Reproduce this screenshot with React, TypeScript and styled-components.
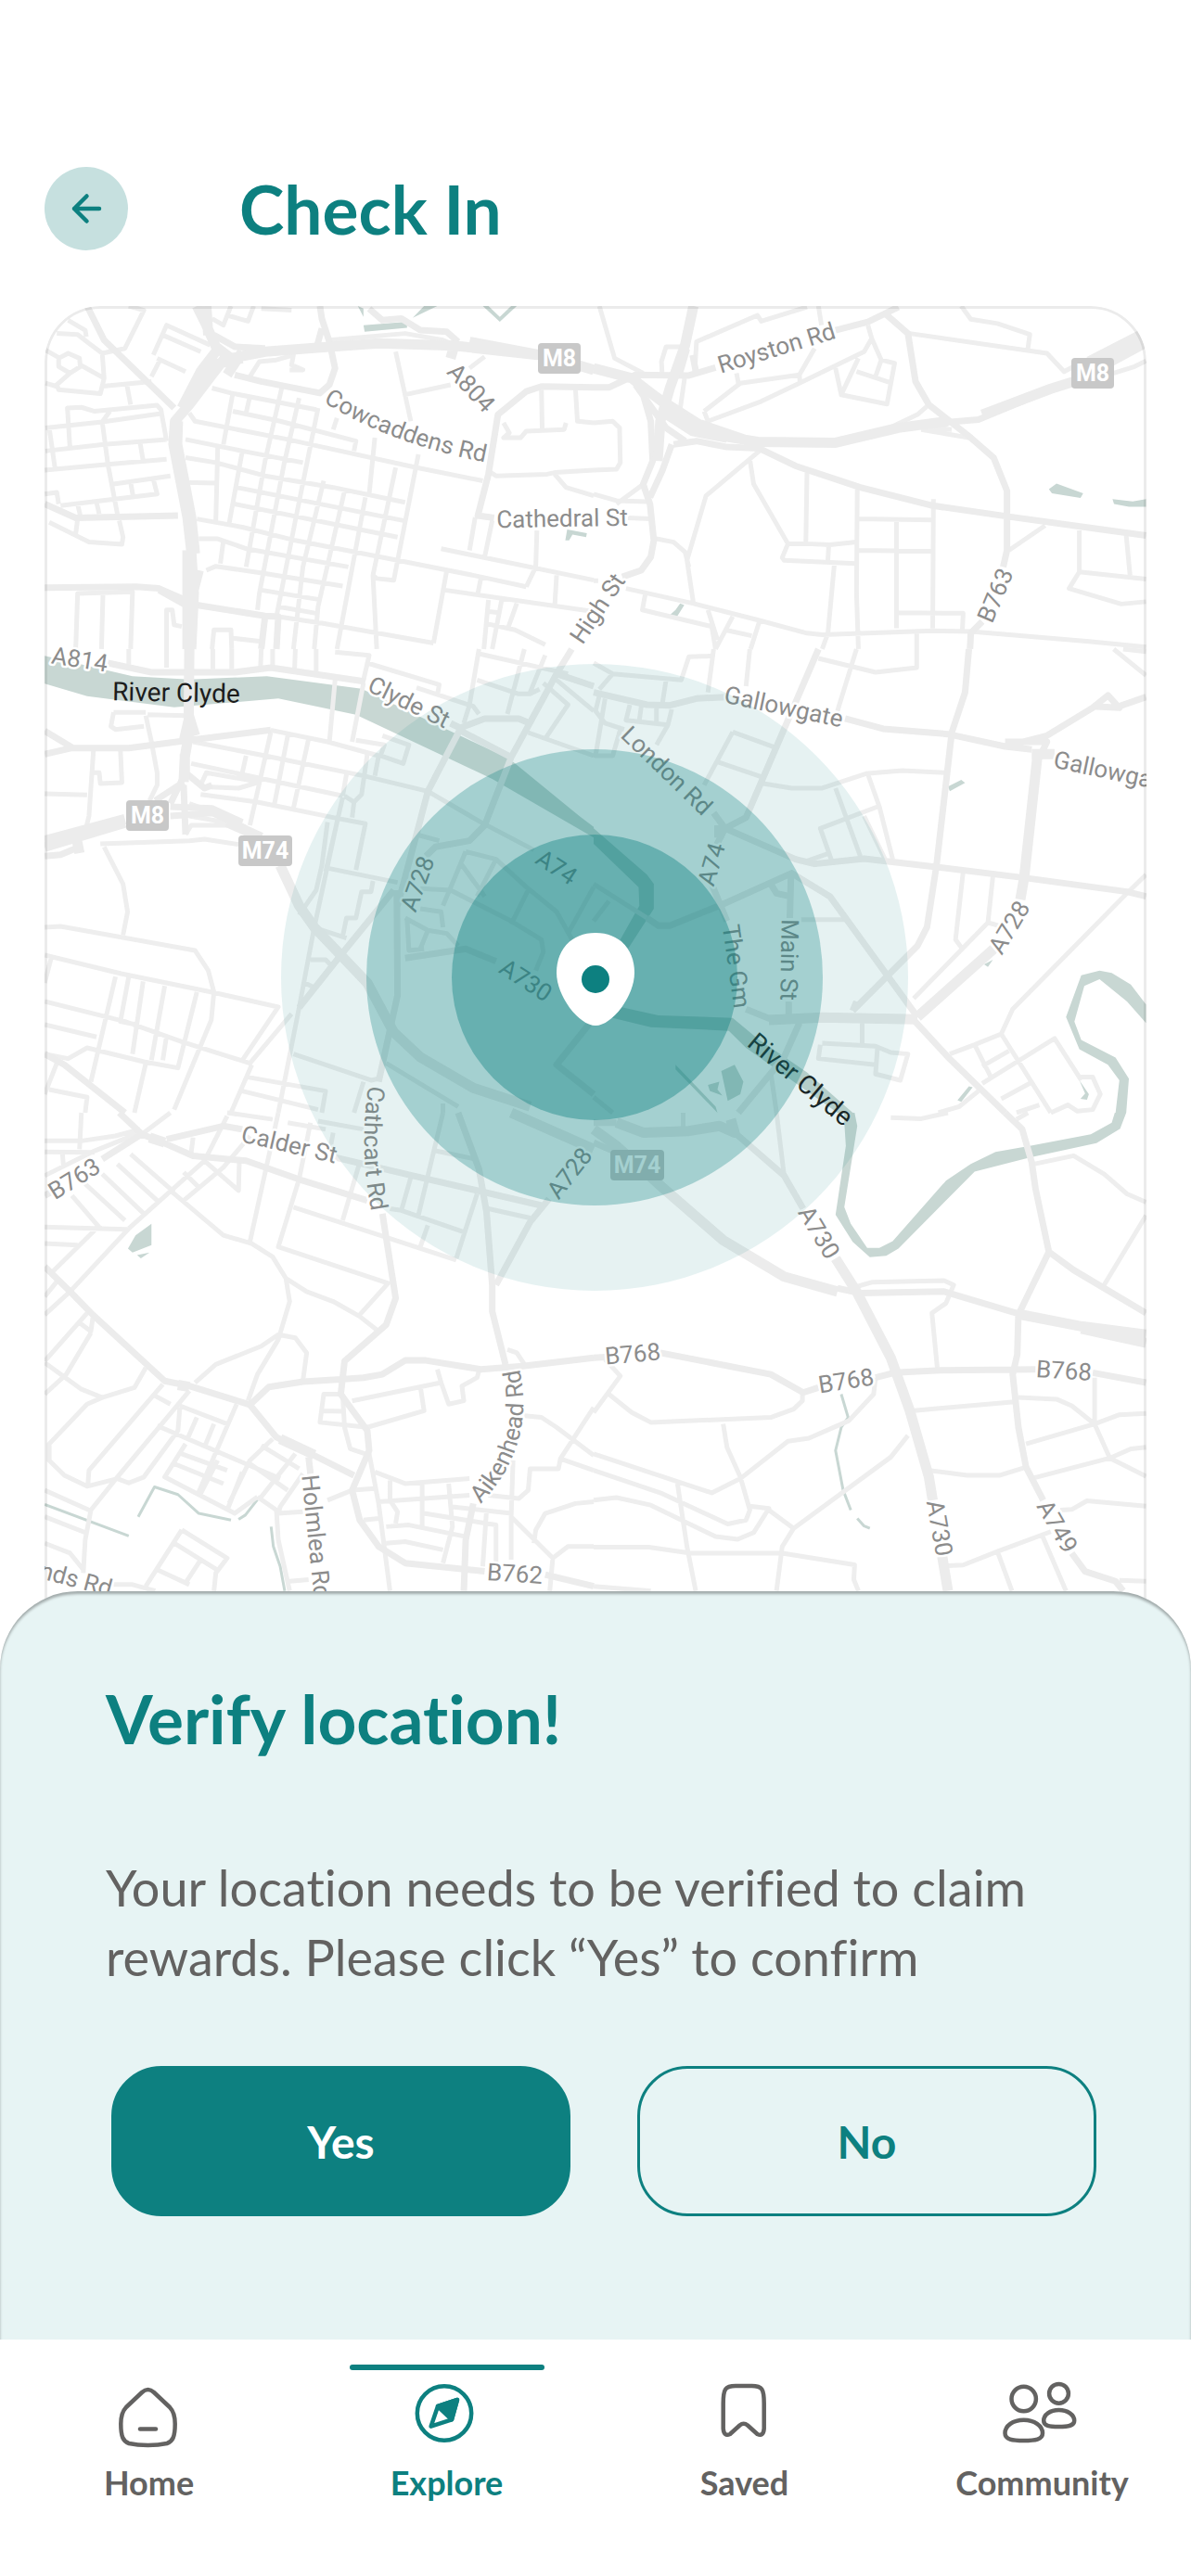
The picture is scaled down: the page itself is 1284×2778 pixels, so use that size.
import React, { useState } from "react";
import styled, { createGlobalStyle } from "styled-components";

type Tile = {
  x: number;
  y: number;
  scale: string;
  streets: string;
  roads: string;
  highways: string;
  water: string;
  streams?: string;
};

type Label = {
  text: string;
  x: number;
  y: number;
  angle: number;
  river?: boolean;
};

// the map is stored as six tiles, each path in its own tile units
const tiles: Tile[] = [
  {
    x: 0,
    y: 140,
    scale: "0.4082 0.3571",
    streets: `M155 690L180 675L210 690L212 715L185 735L155 715ZM120 665L155 688M212 710L275 750L270 675L330 660L380 545L340 532
      M185 735L150 770L155 785L265 797L275 750M120 765L150 775M150 615L205 618L235 645L270 675M180 575L225 605L228 625
      M265 775L400 760M335 770L345 830M185 965L178 840L215 838L250 850L415 832L425 845L440 940
      M120 900L270 882L425 857M270 882L290 850M270 882L285 1010L310 1160M120 970L275 950L440 935M130 900L145 1020
      M118 1028L285 1010L440 995M370 945L378 1000M300 1070L450 1045M345 1065L352 1110M405 1055L415 1100L160 1135
      M118 1100L150 1095L155 1130M205 1130L212 1165M255 1125L262 1160M130 1185L235 1245L322 1252L325 1230L315 1180M205 1175L200 1220
      M200 1568L205 1400L350 1395L345 1568M272 1400L268 1568M440 1568L440 1450L455 1450L460 1495L480 1500
      M405 680L440 590L555 650M415 690L490 730M430 620L530 670M400 745L425 690
      M560 570L590 590L610 532M600 560L655 578L670 532M690 540L770 545M660 745L685 700L730 695L775 680L770 710L800 725L765 725
      M870 635L1070 615L1170 635L1200 650M1045 670L1085 880M1070 800L1190 770M1240 720L1280 685
      M1330 885L1345 915L1330 930L1375 930L1390 910L1490 905L1495 885M1430 785L1432 905M1520 785L1525 880L1568 885
      M1290 1030L1310 1045L1445 1040L1465 1035L1568 1028M1465 1040L1495 1080L1568 1105
      M560 780L610 795L835 845M615 850L740 880L940 940L935 970M500 855L515 880L760 935L880 965L1100 1020L1275 1060
      M490 935L640 970L800 1005M490 990L570 1005L700 1045L880 1080L1070 1125M490 1065L570 1067M625 1080L1065 1180M620 1130L1050 1230
      M520 1175L640 1200L780 1240L1050 1300L1270 1350L1390 1380M525 1235L575 1235L650 1265L920 1320M545 1330L570 1318L700 1340L905 1378
      M690 1390L840 1418M735 1440L835 1460M735 1470L850 1490L1145 1550M615 795L590 950M660 805L650 855M745 775L700 1000L650 1320
      M790 810L750 1010L685 1400L680 1450M840 840L780 1180L730 1470M890 870L880 905M575 960L570 1180M640 970L605 1190M590 1240L582 1310
      M855 1060L800 1320L775 1568M910 1090L840 1440L830 1568M965 1110L890 1568M990 930L975 1100M1045 1020L985 1345
      M1105 980L1040 1360L995 1355L985 1345L995 1568M1165 1265L1568 1360M1180 1330L1145 1550M1175 1390L1568 1455
      M1270 1355L1262 1400M1390 1380L1415 1320L1418 1210M1300 1180L1280 1290M1255 1170L1240 1270M1470 1345L1465 1440
      M1325 1420L1300 1568M1290 1420L1278 1568M1365 1430L1340 1510M1290 1455L1320 1458M1280 1490L1360 1510L1440 1555
      M560 1568L565 1510L610 1510L612 1568M612 1535L690 1545`,
    roads: `M230 532L275 635L460 840M118 1130L200 1172L470 1165M118 1383L360 1380L420 1385L510 1430M420 1390L490 1435
      M520 1435L700 1468L735 1470L730 1568M700 1470L690 1568M620 740L690 760L845 795L870 770L885 720L870 640L850 570L845 532
      M838 650L850 600M1568 778L1430 775L1390 790L1315 860L1290 1040L1262 1165L1305 1172M975 540L1010 575L1060 570L1110 605L1180 610L1210 640
      M565 620L620 655L700 660`,
    highways: `M520 532L545 590L570 655L610 690L700 670L870 655L1000 645L1200 652L1420 680M1200 650L1190 690M1240 640L1450 685L1568 725M545 532L550 620
      M640 690L560 710L500 830L462 880L458 950L480 1080L495 1170L505 1270L512 1400L505 1568M570 670L530 730L480 840M600 680L560 740L500 830
      M470 880L468 950L490 1080L505 1170L515 1280M525 1330L500 1440M495 1270L495 1568M640 670L600 740`,
    water:
      "M960 590L1075 580L1075 598L963 610ZM1090 568L1155 532L1120 532ZM1275 532L1320 580L1365 532L1350 532L1320 565L1290 532ZM1493 1240L1498 1207L1550 1218L1548 1230L1512 1222L1503 1240ZM945 532L960 565L960 540Z",
  },
  {
    x: 640,
    y: 140,
    scale: "0.4107 0.3571",
    streets: `M0 885L50 880L68 900L70 1005L60 1025L0 1028M15 532L55 690L130 735M180 740L178 700L190 655L235 655
      M265 740L270 640L430 560L440 578L560 535M590 532L598 590M375 735L380 765M240 740L225 860
      M290 850L385 765L540 740L580 660M290 850L300 880L440 820L540 765L710 670L730 630L720 590M540 740L542 765
      M730 630L755 695L790 705L770 828L650 800L695 690M755 695L740 745M690 730L775 762M635 720L650 800
      M965 532L990 572L1060 585L1145 618L1140 660M830 615L1190 675L1235 730L1260 715M1365 735L1420 715L1450 698
      M750 915L850 860L880 830M860 905L985 930M800 890L940 905M435 970L295 1105L245 1300L262 1430M410 995L420 1070L510 1250L560 1250L620 1253L690 1245
      M510 1250L495 1292L500 1300L688 1310M617 1255L615 1300M560 1035L557 1250M692 1085L690 1400L695 1568M892 1115L890 1505
      M692 1175L890 1178M690 1270L890 1273M795 1180L795 1505M632 1310L615 1520L600 1568M800 1458L970 1460L968 1510
      M0 1100L60 1120L140 1123M60 1130L125 1075M90 1172L150 1175M165 1235L210 1245L240 1275L250 1320
      M85 1385L260 1430L430 1480L560 1520L600 1525L890 1513L990 1515L1300 1545L1450 1562M135 1405L128 1450L310 1500L320 1568
      M300 1450L325 1540M365 1470L320 1568M345 1510L415 1528M435 1485L412 1568M848 1520V1568M1185 1195L1090 1270
      M1275 1210V1335L1450 1357M1275 1335L1248 1385L1385 1432L1450 1425M1398 1225L1408 1345M0 1362H12`,
    roads: `M0 778L40 778L110 740L250 742L320 718M635 605L720 580L765 555L800 535M765 555L825 615L845 760L880 830L990 930L1050 990L1085 1090L1085 1270L1075 1320
      M1020 1485L990 1520L988 1568M210 950L270 940L350 958L435 962L530 1015L700 1080L890 1135L1090 1168L1290 1200L1450 1225
      M100 750L130 800L150 880L155 1000L130 1070L148 1130L158 1240L150 1290L125 1330L75 1350M205 950L180 1030L148 1110M260 680L270 740M110 770L190 900L240 940M150 790L300 900
      M860 890L1010 875L1200 785`,
    highways: `M262 532L240 650L200 780L175 880L168 1000M0 720L100 750L190 830L260 890L340 925L430 942L635 945L800 900L930 880M1020 860L1200 782L1260 760M1300 700L1435 620
      M1340 710L1445 645M240 660L220 740M180 850L260 910L350 930M280 890L420 945`,
    water:
      "M1195 1085L1215 1068L1285 1098L1278 1112L1203 1098ZM1362 1115L1415 1122L1450 1115L1450 1138L1405 1138L1366 1130ZM215 1450L227 1430L238 1435L220 1468L200 1465Z",
  },
  {
    x: 0,
    y: 700,
    scale: "0.4082 0.3333",
    streets: `M300 205L385 205M300 205L293 250L305 260L380 250M390 212L490 215M385 215L400 300L415 400L415 440L395 490M118 468L230 472
      M247 325L235 540L225 590M247 400L262 400L265 435L322 432L318 325M265 630L500 620L540 615L630 632M275 640L325 760L337 850L325 925
      M118 900L160 897L515 975L550 1040L565 1110L558 1200L460 1490M118 990L320 1050L560 1110L735 1158L640 1330
      M135 1000L118 1080M118 1140L330 1205L480 1270L660 1340L770 1180M118 1215L255 1255M305 1060L240 1400M340 1060L318 1205L360 1215
      M378 1075L350 1310M435 1090L400 1330M520 1110L470 1355L380 1335L230 1290L180 1325L118 1310M440 1250L430 1330M385 1340L355 1500
      M130 1425L230 1450L225 1500M150 1340L118 1440M715 262L865 300L1000 345M510 300L700 345L960 410L1130 460L1270 560L1410 650
      M505 370L905 475M715 270L660 570M760 280L725 500M815 290L775 515M650 345L640 400M530 440L545 400L685 430L630 450L530 445
      M530 470L680 495L880 545L965 565L940 715M885 100L870 300M960 110L930 300M915 405L905 475M970 340L955 470L935 495L910 475
      M935 495L930 545M905 480L860 720M1000 345L990 410M940 295L1015 310L1005 345L1065 370L1080 310L1010 280
      M865 560L850 700L835 780L790 860M890 560L830 900L790 1160L735 1500M870 710L1050 755M985 750L980 785L955 785L940 870L915 870L905 930
      M840 905L915 935M820 1005L860 1005L880 1030M805 1080L830 1095M775 1310L980 1395L1000 1390M500 500L640 560M500 540L640 570M490 600L505 570L600 570
      M340 0V50M440 0V60M562 0V65M612 0V65M690 0L688 60M720 0V55M780 0L778 65M835 0V75M885 10L975 20L960 100
      M970 45L1160 115L1155 150M1100 125L1250 185L1265 210M1265 0L1240 180L1225 240M1265 15L1500 80M1385 0L1340 210M1260 100L1370 145L1400 145L1425 130
      M1440 20L1400 140M1435 110L1500 180L1440 290M1470 100L1568 200M1395 270L1568 345M1100 600L1160 620
      M1230 655L1310 680L1390 770L1470 850L1520 960M1230 655L1170 830M1215 690L1280 800M1110 775L1190 780L1350 880L1430 940L1435 980L1415 1040
      M1395 780L1350 890M1310 680L1260 800M1110 840L1165 850L1170 900M1070 870L1130 910L1110 970M1130 910L1180 920L1210 960M1568 770L1500 920
      M1075 870L1080 975L1120 970M1020 1340L1210 1480M655 1385L860 1430L850 1500
      M640 1430L840 1490M665 1345L610 1500M960 1400L935 1500M1170 1470V1500`,
    roads: `M285 45L400 75L500 75L620 75L715 60L965 105M118 340L190 320L340 320L500 295L715 262M118 265L190 318
      M1190 240L1215 255L1280 225L1370 225L1395 238M1210 260L1350 350L1470 80L1510 0M1215 260L1130 460L1100 600L1050 830
      M1350 350L1280 570L1240 620L1150 640L1125 670M1048 780L1050 1120L1000 1400M1070 1000L1230 970L1310 1010M1040 780L900 990L790 1160
      M1470 80L1568 120M118 1310L170 1345L330 1500M485 430L410 490M490 400L450 500M490 400L540 450L560 440M485 440L490 600
      M450 540L560 530L650 580M450 510L560 515L640 560M118 670L160 665L210 640M1568 1195L1470 1345L1568 1440`,
    highways: `M500 0L498 280L488 350L485 430M488 340L488 420M118 620L330 550M118 640L330 562M200 600L210 660
      M600 560L690 610M740 700L790 830L830 900L900 990L970 1080L1040 1240L1110 1320L1250 1420L1400 1480M515 280L500 220L485 300`,
    water:
      "M118 22L350 88L500 98L705 88L955 128L1120 225L1345 355L1530 540L1568 575L1568 610L1300 420L940 212L735 160L460 188L230 152L118 112Z",
  },
  {
    x: 640,
    y: 700,
    scale: "0.4107 0.3333",
    streets: `M590 30L740 75L848 60V0M690 0L640 200M315 0L300 140M410 0L400 120M310 22L250 25L230 100L50 80L0 45M50 80L15 130M190 100L180 180
      M15 150L5 200L30 240L80 260M30 160L5 345L50 345L70 260M95 180L85 230L195 245L205 195M125 185L120 230M165 190V240M195 245L165 310
      M365 268L480 320M365 268L290 440M325 365L445 415M445 435L520 450L600 450L715 403L810 393L925 400M635 450L700 670
      M720 405L750 510L785 680M745 510L595 580L625 685M710 540L765 680M550 690L620 660M970 720L950 940L965 965M1048 735L1035 885L840 1130
      M1035 885L1065 895M1450 730L1400 790L1100 1165L1070 1245L1000 1280L935 1310M1070 1245L1200 1500M1000 1280L1045 1390M1020 1350L1090 1300
      M1020 1405L1210 1260L1280 1395M1070 1455L1145 1405M545 875L660 875M595 1280L590 1325L740 1345M600 1275L740 1285L780 1305L825 1310L805 1395L740 1375L745 1290
      M705 1210V1275M1365 0L1450 85M1275 1385L1310 1385L1330 1440L1310 1490L1270 1495L1245 1475L1200 1500M1110 1500L1170 1475
      M1010 1430L960 1480L905 1500M465 1370L480 1500M0 760L140 870M40 815L0 880M0 1450L50 1500M1390 0L1450 8`,
    roads: `M985 0L975 140L940 270L928 400L900 700L875 900L850 960L680 1170M660 225L760 258L930 275L1080 315L1150 325M1080 315L1190 280L1310 190L1350 150L1380 190L1310 185M1380 185L1450 155
      M1080 300H1190L1170 350M400 1165L460 1195L600 1190M840 1200L930 1320L1080 1500M0 140L140 180L200 182L270 160L345 155
      M345 580L530 680L580 695L710 678L900 705L1130 740L1400 785L1450 800M315 530L345 580L320 640M345 580L400 545L510 230L590 0
      M310 760L350 880M140 870L170 895L200 895L340 825L520 725L620 800L850 1190M518 730L515 870M512 1140V1190M540 1210L500 1320L380 1500M465 760L480 790L515 800M690 1140L680 1170`,
    highways: "M1150 340H1210M1165 345L1130 740L1120 810M1050 970L850 1190M460 1200L600 1192L720 1195L850 1198M330 570V610",
    water:
      "M0 580L140 730L158 760L158 840L90 970L70 940L120 830L118 770L0 630ZM60 1155L170 1185L365 1193L430 1260L560 1370L680 1500L640 1500L400 1290L355 1235L150 1223L40 1190ZM1450 1150L1410 1085L1360 1048L1328 1040L1280 1055L1240 1190L1275 1295L1350 1345L1380 1395L1370 1500L1398 1500L1405 1390L1370 1322L1280 1265L1262 1205L1288 1090L1328 1068L1400 1140L1450 1210ZM930 445L965 423L975 433L935 460ZM955 1460L985 1415L995 1418L965 1465ZM335 1365L370 1345L393 1400L385 1440L352 1462ZM300 1410L330 1400L325 1425L338 1445L305 1430ZM215 1345L320 1480L325 1500L215 1360ZM1275 1395L1300 1440L1295 1458L1278 1455L1290 1438ZM1025 1020L1048 1005L1035 1028Z",
  },
  {
    x: 0,
    y: 1200,
    scale: "0.4082 0.3571",
    streets: `M118 85L215 85L305 70L370 50M215 0L210 110M118 118L250 120M118 190L250 115L370 60M165 125L168 165M190 250L265 350M345 125L460 240
      M310 155L415 265M270 185L380 305M225 215L330 325M118 345L335 352M250 355L130 490M118 395L205 400M340 350L185 540L118 610
      M600 10L540 145L340 350M380 60L450 0M510 75L505 120M660 70L590 165L480 270M540 145L630 235L632 150M485 180L525 225
      M455 240L590 370L665 395L720 435L755 500L765 570L735 685L680 790L655 870M735 0L660 390M820 30L790 200L735 405L1025 515L950 610
      M755 500L810 540L880 570L950 615L1000 660M775 285L1205 445M950 150L905 325M760 30L860 50M880 60L870 120M1170 0L1105 310
      M1085 195L1060 295L1030 290M1060 295L1225 360M1260 245L1205 440M1130 340L1110 405M1290 290L1400 318M1150 115L1255 140M840 25L960 50
      M118 750L230 605M118 555L150 510M205 630L240 660L245 620M240 665L175 790L118 850M118 755L215 835L270 860L355 830L385 770
      M270 860L230 880L130 1000L130 1050L170 1095L230 1128L310 1105L340 1118L380 1100L470 960L475 890M430 820L235 1080L232 1125M410 855L450 880
      M500 840L460 895L310 1100L240 1200L225 1290L220 1390M515 815L570 760L690 705L735 670L780 680L810 725L800 810M475 885L600 940
      M415 945L740 1105M625 880L525 1145M520 920L495 985M565 940L540 1010M490 1000L435 1100L620 1210L680 1160M460 1060L590 1120M480 1030L600 1080
      M575 1050L530 1150M640 1085L600 1200M720 985L660 1050L605 1180M690 1005L790 1075M780 1030L690 1160M660 1060L760 1140
      M800 1090L740 1190L735 1210M680 1160L730 1200L735 1290L765 1444M735 1210L800 1205M765 1415L815 1410
      M118 1140L245 1205M118 1220L230 1270M118 1300L185 1330L220 1380M480 1260L600 1345L570 1390L565 1444M480 1260L385 1430M460 1300L580 1385
      M415 1380L500 1425M530 1350L490 1420M300 1425L350 1425L410 1444M900 850H855L845 935L970 950L1120 900L1110 825M850 900L905 902
      M905 850L910 950L925 1015L965 1030M930 870L1165 815L1155 775M1165 815L1185 880L1225 870L1220 825L1260 800L1265 780
      M1340 715L1365 725L1385 760M975 1030L1000 1180L1030 1444M865 1170L930 1140L990 1135M990 1085L1070 1120L1240 1105
      M1030 1110V1170L1050 1205L1045 1240M1000 1175L1240 1155M1115 1120V1250M1185 1120L1195 1250L1170 1360M1120 1210L1310 1245V1380
      M1020 1250L1080 1245L1230 1280M1020 1300L1070 1295L1170 1320M960 1230L1000 1225M1195 1190L1350 1210M1285 1200L1275 1370
      M1355 1050L1350 1220L1460 1345L1452 1444M1350 1220V1350M1385 915L1430 920L1470 950L1568 1035M1568 890L1480 1045L1475 1075L1400 1075L1395 1140L1370 1165L1290 1155
      M1480 1045L1568 1080M1568 1175L1520 1180L1440 1210L1415 1260L1410 1300M1460 1345L1500 1310L1568 1310M600 0L720 20`,
    roads: `M315 0L375 65L430 90L510 130L650 145L800 205L970 265M440 80L590 40L640 50M118 250L135 240M270 140L380 60M885 135L1090 190L1430 280
      M1010 305L1045 560L1020 640L910 750L900 850L970 960L975 1020L930 1140L950 1230L1000 1310L1070 1360L1280 1385M1440 1395L1568 1430
      M1210 0L1265 170L1285 300L1300 520L1300 600L1335 760M1450 260L1400 330L1310 520M118 465L185 540L245 610L435 810L500 825L660 882L710 828L800 812L900 805
      L960 800L1010 790L1070 748L1125 748L1270 775L1380 765L1568 740M660 882L730 980L830 1035L935 1095M815 1040L820 1090M1250 1180L1230 1290L1225 1444`,
    highways: "M1350 0L1568 110M395 75L435 90M470 822L500 828M740 985L830 1033",
    water: "M400 335L400 400L350 422L338 410L358 370ZM362 430L395 422L372 440Z",
    streams:
      "M118 1183L340 1278M365 1220L408 1130L470 1153L525 1210L610 1230M630 1228L648 1215L680 1168M716 1250L722 1310L740 1370L752 1444",
  },
  {
    x: 640,
    y: 1200,
    scale: "0.4107 0.3571",
    streets: `M480 0L500 190M690 525L730 512L920 507L945 520L925 575L888 605L902 770M1155 155L1260 130L1340 185L1400 245L1450 270M1450 310L1340 520
      M780 15L860 18L930 0M30 745L70 795L0 905M40 850L100 905L150 935L465 920L525 895L548 870V845M340 940L350 1010L385 1100L410 1200L400 1230L352 1242L180 1150L0 1080
      M0 1030L310 1148L385 1105L510 992L565 983L670 930L735 850L740 800M0 1170L60 1162L150 1185L320 1280L378 1288L420 1268L460 1195L410 1188
      M460 1200L525 1255L780 1040L825 975M525 1255L495 1310L480 1444M220 1120L245 1310L268 1444M0 1312L145 1312L255 1330L495 1330L685 1365L683 1410L695 1444
      M0 1430L150 1444M835 900L1105 873M1115 860L1215 865L1255 885L1315 940L1135 1000M1315 800V940L1380 912L1450 908
      M1315 940L1355 1043L1155 1103M1355 1043L1410 1015L1450 1010M1355 1043L1450 1098M880 1080L980 1095L1065 1095L1130 1072
      M1225 1200L1255 1198L1295 1172L1450 1188M930 1368L970 1366L1060 1325L1200 1265M1060 1325L1098 1444M1175 1270L1240 1444
      M1380 1412L1450 1415M1110 20L1140 0M235 0V50`,
    roads: `M370 60L500 190L550 290M175 725L465 790L550 845L590 830M740 800L790 785L910 778L1160 775M1310 785L1450 815M0 740L30 738
      M1080 0L1125 50L1150 150L1160 230L1195 420L1115 610L1112 730L1100 790L1115 950L1135 1070L1180 1170M1255 1330L1290 1385L1370 1415L1390 1444
      M1195 420L1260 475L1450 605M0 30L60 30M0 90L60 120M640 530L700 545L920 540L1110 605`,
    highways: `M60 30L130 60L250 55L330 40L370 60L360 20M0 50L60 100L180 225L340 385L500 495L640 540M1110 607L1280 645L1450 670
      M1280 652L1450 695M635 440L690 540L780 740L830 900L880 1100L890 1170M915 1340L930 1444`,
    water:
      "M658 0L685 0L692 40L658 285L675 335L718 408L750 408L785 388L925 205L990 155L1055 118L1145 100L1305 65L1360 30L1368 0L1398 0L1382 48L1320 92L1145 135L1000 178L800 410L768 432L725 436L680 390L635 308L662 100L658 30Z",
    streams:
      "M650 850L668 920L650 950L635 1020L655 1140L675 1200M692 1225L710 1248L725 1255",
  },
];

const labels: Label[] = [
  { text: "A804", x: 508, y: 418, angle: 47 },
  { text: "Cathedral St", x: 606, y: 559, angle: -1 },
  { text: "High St", x: 644, y: 656, angle: -56 },
  { text: "Royston Rd", x: 837, y: 375, angle: -17 },
  { text: "A814", x: 86, y: 711, angle: 9 },
  { text: "River Clyde", x: 190, y: 747, angle: 1, river: true },
  { text: "Clyde St", x: 441, y: 757, angle: 26 },
  { text: "B763", x: 1073, y: 642, angle: -67 },
  { text: "Gallowgate", x: 845, y: 762, angle: 12 },
  { text: "Gallowgate", x: 1200, y: 832, angle: 12 },
  { text: "London Rd", x: 719, y: 831, angle: 44 },
  { text: "A74", x: 767, y: 932, angle: -74 },
  { text: "A74", x: 600, y: 935, angle: 33 },
  { text: "A728", x: 450, y: 953, angle: -70 },
  { text: "A730", x: 567, y: 1057, angle: 33 },
  { text: "Main St", x: 851, y: 1035, angle: 91 },
  { text: "The Gm", x: 794, y: 1042, angle: 82 },
  { text: "A728", x: 1088, y: 1000, angle: -59 },
  { text: "River Clyde", x: 863, y: 1164, angle: 40, river: true },
  { text: "Calder St", x: 312, y: 1234, angle: 13 },
  { text: "B763", x: 80, y: 1271, angle: -32 },
  { text: "A728", x: 614, y: 1265, angle: -52 },
  { text: "A730", x: 883, y: 1329, angle: 59 },
  { text: "B768", x: 682, y: 1460, angle: -5 },
  { text: "B768", x: 912, y: 1489, angle: -9 },
  { text: "B768", x: 1147, y: 1478, angle: 4 },
  { text: "A730", x: 1013, y: 1648, angle: 80 },
  { text: "A749", x: 1140, y: 1646, angle: 60 },
  { text: "B762", x: 555, y: 1697, angle: 4 },
  { text: "nds Rd", x: 82, y: 1703, angle: 15 },
];

const curvedLabels = [
  { id: "cowcaddens", text: "Cowcaddens Rd", d: "M346 432Q420 479 526 499" },
  { id: "cathcart", text: "Cathcart Rd", d: "M398 1167Q386 1236 401 1310" },
  { id: "aikenhead", text: "Aikenhead Rd", d: "M515 1625Q580 1560 559 1472" },
  { id: "holmlea", text: "Holmlea Rd", d: "M325 1590L339 1726" },
];

const shields = [
  { text: "M8", x: 603, y: 386, width: 46 },
  { text: "M8", x: 1178, y: 402, width: 46 },
  { text: "M8", x: 159, y: 879, width: 46 },
  { text: "M74", x: 286, y: 917, width: 58 },
  { text: "M74", x: 687, y: 1256, width: 58 },
];

const CityMap = () => (
  <MapSvg viewBox="48 330 1188 1430" role="img" aria-label="Map of Glasgow">
    {tiles.map((tile) => (
      <g
        key={`${tile.x}-${tile.y}`}
        transform={`translate(${tile.x} ${tile.y}) scale(${tile.scale})`}
      >
        <Water d={tile.water} />
        {tile.streams && <Road d={tile.streams} $color="#c8d7d3" $width={3} />}
        <Road d={tile.streets} $color="#eeeeee" $width={5} />
        <Road d={tile.roads} $color="#ececec" $width={7} />
        <Road d={tile.highways} $color="#ececec" $width={11} />
      </g>
    ))}
    {labels.map((label) => (
      <MapLabel
        key={`${label.text}-${label.x}`}
        transform={`translate(${label.x} ${label.y}) rotate(${label.angle})`}
        dominantBaseline="central"
        $river={label.river}
      >
        {label.text}
      </MapLabel>
    ))}
    {curvedLabels.map((label) => (
      <React.Fragment key={label.id}>
        <path id={label.id} d={label.d} fill="none" />
        <MapLabel>
          <textPath href={`#${label.id}`} startOffset="50%">
            {label.text}
          </textPath>
        </MapLabel>
      </React.Fragment>
    ))}
    {shields.map((shield) => (
      <g key={`${shield.x}-${shield.y}`}>
        <rect
          x={shield.x - shield.width / 2}
          y={shield.y - 16}
          width={shield.width}
          height={33}
          rx={4}
          fill="#c8c8c8"
        />
        <ShieldText x={shield.x} y={shield.y + 9}>
          {shield.text}
        </ShieldText>
      </g>
    ))}
    <g fill="#0d8080">
      <circle cx="641" cy="1054" r="338" opacity="0.1" />
      <circle cx="641" cy="1054" r="246" opacity="0.3" />
      <circle cx="641" cy="1054" r="154" opacity="0.4" />
    </g>
    <path
      d="M642 1006C668 1006 684 1024 684 1049C684 1074 660 1106 642 1106C624 1106 600 1074 600 1049C600 1024 616 1006 642 1006Z"
      fill="#fff"
    />
    <circle cx="642" cy="1056" r="15" fill="#0d8080" />
  </MapSvg>
);

const HomeIcon = () => (
  <Icon viewBox="0 0 84 84">
    <path d="M34 18Q40.500 12 47 18L64 34Q69.700 40 69.700 52C69.700 66 67 71 61 73Q52 75 40.500 75Q29 75 20 73C14 71 11.300 66 11.300 52Q11.300 40 17 34Z" />
    <path d="M32 57.500H49" />
  </Icon>
);

const ExploreIcon = () => (
  <Icon viewBox="0 0 84 84">
    <circle cx="39" cy="40.500" r="29.200" />
    <path d="M53 26L32 33L24.600 54.700L47 47.300Z" />
    <path d="M53 26L32 33L47 47.300Z" fill="currentColor" />
  </Icon>
);

const SavedIcon = () => (
  <Icon viewBox="0 0 84 84">
    <path d="M18.700 30C18.700 14 21 11 32 11H49.500C60.500 11 62.700 14 62.700 30V57Q62 66 55.500 63L45 53.500Q40.700 50 36.500 53.500L26 63Q19.500 66 18.700 57Z" />
  </Icon>
);

const CommunityIcon = () => (
  <Icon viewBox="0 0 84 84">
    <circle cx="21.700" cy="25" r="13.200" />
    <path d="M21.700 47.700C33 47.700 42 54 42 62C42 69 34 70 21.700 70C9.500 70 1.500 69 1.500 62C1.500 54 10 47.700 21.700 47.700Z" />
    <circle cx="59.500" cy="19.300" r="10.400" />
    <path d="M59.500 37C69 37 76.200 42 76.200 48.500C76.200 54 70 55 59.500 55C49 55 43.200 54 43.200 48.500C43.200 42 50 37 59.500 37Z" />
  </Icon>
);

const tabs = [
  { name: "Home", icon: <HomeIcon /> },
  { name: "Explore", icon: <ExploreIcon /> },
  { name: "Saved", icon: <SavedIcon /> },
  { name: "Community", icon: <CommunityIcon /> },
];

function App() {
  const [activeTab, setActiveTab] = useState("Explore");

  return (
    <>
      <GlobalStyle />
      <Screen>
        <Header>
          <BackButton type="button" aria-label="Back">
            <svg width="36" height="36" viewBox="0 0 36 36">
              <path
                d="M32 18H5M18.500 4.500L5 18L18.500 31.500"
                fill="none"
                stroke="currentColor"
                strokeWidth="4.500"
                strokeLinecap="round"
                strokeLinejoin="round"
              />
            </svg>
          </BackButton>
          <Title>Check In</Title>
        </Header>
        <MapFrame>
          <CityMap />
        </MapFrame>
        <Sheet>
          <SheetTitle>Verify location!</SheetTitle>
          <Message>
            Your location needs to be verified to claim rewards. Please click
            “Yes” to confirm
          </Message>
          <Actions>
            <ActionButton type="button" $filled>
              Yes
            </ActionButton>
            <ActionButton type="button">No</ActionButton>
          </Actions>
        </Sheet>
        <TabBar>
          {tabs.map((tab) => (
            <Tab
              key={tab.name}
              href={`#${tab.name.toLowerCase()}`}
              $active={tab.name === activeTab}
              onClick={() => setActiveTab(tab.name)}
            >
              {tab.icon}
              {tab.name}
            </Tab>
          ))}
        </TabBar>
      </Screen>
    </>
  );
}

const GlobalStyle = createGlobalStyle`
  * {
    box-sizing: border-box;
  }
  body {
    margin: 0;
    background: #ffffff;
    font-family: "Lato", sans-serif;
    font-variant-ligatures: none;
  }
`;
const Screen = styled.main`
  display: flex;
  flex-direction: column;
  min-height: 100vh;
`;
const Header = styled.header`
  display: flex;
  align-items: center;
  gap: 120px;
  padding: 180px 48px 60px;
`;
const BackButton = styled.button`
  display: flex;
  align-items: center;
  justify-content: center;
  width: 90px;
  height: 90px;
  padding: 0;
  border: none;
  border-radius: 50%;
  background: #c6e0df;
  color: #0d8080;
`;
const Title = styled.h1`
  margin: 0;
  font-size: 73px;
  line-height: 90px;
  font-weight: 700;
  color: #0d8080;
`;
const MapFrame = styled.div`
  position: relative;
  margin: 0 48px;
  border-radius: 60px 60px 0 0;
  overflow: hidden;
  &::after {
    content: "";
    position: absolute;
    inset: 0;
    border: 3px solid rgba(0, 0, 0, 0.08);
    border-radius: 60px 60px 0 0;
  }
`;
const MapSvg = styled.svg`
  display: block;
  width: 100%;
  height: auto;
`;
const Road = styled.path<{ $color: string; $width: number }>`
  fill: none;
  stroke: ${({ $color }) => $color};
  stroke-width: ${({ $width }) => $width}px;
  stroke-linejoin: round;
  vector-effect: non-scaling-stroke;
`;
const Water = styled.path`
  fill: #c8d7d3;
`;
const MapLabel = styled.text<{ $river?: boolean }>`
  font-family: "Roboto", sans-serif;
  font-size: ${({ $river }) => ($river ? 28 : 26)}px;
  text-anchor: middle;
  fill: ${({ $river }) => ($river ? "#1c1c1c" : "#8c8c8c")};
  stroke: ${({ $river }) => ($river ? "none" : "#ffffff")};
  stroke-width: 5px;
  stroke-linejoin: round;
  paint-order: stroke;
`;
const ShieldText = styled.text`
  font-family: "Roboto", sans-serif;
  font-size: 25px;
  font-weight: 700;
  text-anchor: middle;
  fill: #ffffff;
`;
const Sheet = styled.section`
  position: relative;
  flex: 1;
  margin-top: -44px;
  padding: 92px 102px 132px 114px;
  border-radius: 84px 84px 0 0;
  background: #e7f4f4;
  box-shadow: inset 0 3px 3px rgba(0, 0, 0, 0.3);
`;
const SheetTitle = styled.h2`
  margin: 0 0 100px;
  font-size: 73px;
  line-height: 90px;
  font-weight: 700;
  color: #0d8080;
`;
const Message = styled.p`
  margin: 0 0 80px;
  font-size: 54px;
  line-height: 75px;
  color: #636261;
`;
const Actions = styled.div`
  display: flex;
  gap: 72px;
  padding-left: 6px;
`;
const ActionButton = styled.button<{ $filled?: boolean }>`
  flex: 1;
  height: 162px;
  border: 3px solid #0d8080;
  border-radius: 54px;
  background: ${({ $filled }) => ($filled ? "#0d8080" : "transparent")};
  color: ${({ $filled }) => ($filled ? "#ffffff" : "#0d8080")};
  font-family: inherit;
  font-size: 48px;
  font-weight: 700;
`;
const TabBar = styled.nav`
  display: grid;
  grid-template-columns: repeat(4, 1fr);
  padding: 27px 0 79px;
  background: #ffffff;
`;
const Tab = styled.a<{ $active: boolean }>`
  display: flex;
  flex-direction: column;
  align-items: center;
  color: ${({ $active }) => ($active ? "#0d8080" : "#636261")};
  font-size: 36px;
  line-height: 44px;
  font-weight: 700;
  text-decoration: none;
  &::before {
    content: "";
    width: 210px;
    height: 6px;
    border-radius: 3px;
    background: ${({ $active }) => ($active ? "#0d8080" : "transparent")};
  }
`;
const Icon = styled.svg`
  width: 84px;
  height: 84px;
  margin: 6px 0 9px;
  overflow: visible;
  fill: none;
  stroke: currentColor;
  stroke-width: 4.5px;
  stroke-linecap: round;
  stroke-linejoin: round;
`;

export default App;
